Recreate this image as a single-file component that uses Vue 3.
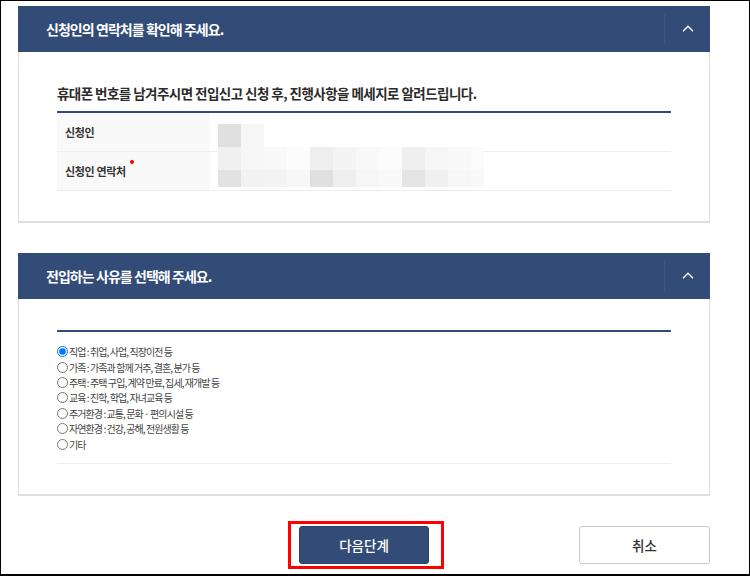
<template>
  <div class="page">
    <section class="panel first">
      <header class="panel-head">
        <h2>신청인의 연락처를 확인해 주세요.</h2>
        <button class="toggle" type="button" aria-label="접기">
          <svg width="12" height="7" viewBox="0 0 12 7"><path d="M1 6.2 6 1.2l5 5" fill="none" stroke="#fff" stroke-width="1.4" /></svg>
        </button>
      </header>
      <div class="panel-body contact">
        <p class="lead">휴대폰 번호를 남겨주시면 전입신고 신청 후, 진행사항을 메세지로 알려드립니다.</p>
        <div class="table">
          <div class="row one">
            <div class="th">신청인</div>
            <div class="td"></div>
          </div>
          <div class="row two">
            <div class="th">신청인 연락처<i class="req"></i></div>
            <div class="td"></div>
          </div>
          <div class="mosaic">
            <span
              v-for="(c, i) in mosaic"
              :key="i"
              :style="{ background: c }"
            ></span>
          </div>
        </div>
      </div>
    </section>

    <section class="panel second">
      <header class="panel-head">
        <h2>전입하는 사유를 선택해 주세요.</h2>
        <button class="toggle" type="button" aria-label="접기">
          <svg width="12" height="7" viewBox="0 0 12 7"><path d="M1 6.2 6 1.2l5 5" fill="none" stroke="#fff" stroke-width="1.4" /></svg>
        </button>
      </header>
      <div class="panel-body reason">
        <div class="options">
          <label v-for="r in reasons" :key="r">
            <input type="radio" name="reason" :value="r" v-model="picked" />
            <span>{{ r }}</span>
          </label>
        </div>
      </div>
    </section>

    <div class="actions">
      <div class="highlight">
        <button class="next" type="button">다음단계</button>
      </div>
      <button class="cancel" type="button">취소</button>
    </div>
  </div>
</template>

<script setup>
import { ref } from 'vue'

const reasons = [
  '직업 : 취업, 사업, 직장이전 등',
  '가족 : 가족과 함께 거주, 결혼, 분가 등',
  '주택 : 주택 구입, 계약 만료, 집세, 재개발 등',
  '교육 : 진학, 학업, 자녀교육 등',
  '주거환경 : 교통, 문화 · 편의시설 등',
  '자연환경 : 건강, 공해, 전원생활 등',
  '기타',
]
const picked = ref(reasons[0])

// 가려진 개인정보 모자이크 (12칸 x 3줄)
const mosaic = [
  '#e0e0e0', '#f6f6f6', '#fff', '#fff', '#fff', '#fff', '#fff', '#fff', '#fff', '#fff', '#fff', '#fff',
  '#f0f0f0', '#f6f6f6', '#f8f8f8', '#fcfcfc', '#eeeeee', '#f4f4f4', '#f8f8f8', '#fcfcfc', '#efefef', '#f6f6f6', '#f9f9f9', '#fbfbfb',
  '#e2e2e2', '#f2f2f2', '#f3f3f3', '#f7f7f7', '#e0e0e0', '#eeeeee', '#f6f6f6', '#f9f9f9', '#e4e4e4', '#f0f0f0', '#f7f7f7', '#f9f9f9',
]
</script>

<style>
html,
body {
  margin: 0;
  background: #fff;
}
</style>

<style scoped>
* {
  box-sizing: border-box;
}

.page {
  width: 750px;
  height: 576px;
  padding: 5px 39px 0 17px;
  border: 1px solid #000;
  border-bottom-width: 2px;
  overflow: hidden;
  background: #fff;
  font-family: "Noto Sans CJK KR", "Noto Sans", sans-serif;
  color: #333;
}

.panel {
  border: 1px solid #dedede;
  border-top: 0;
  border-bottom-width: 2px;
  background: #fff;
}

.panel.second {
  margin-top: 30px;
}

.panel-head {
  height: 46px;
  margin: 0 -1px;
  padding: 0 0 1px 28px;
  display: flex;
  align-items: center;
  justify-content: space-between;
  background: #324b77;
  color: #fff;
}

.panel-head h2 {
  margin: 0;
  font-size: 14px;
  font-weight: 700;
  letter-spacing: -0.95px;
}

.toggle {
  width: 46px;
  height: 30px;
  padding: 0;
  border: 0;
  border-left: 1px solid #3d5682;
  background: none;
  display: flex;
  align-items: center;
  justify-content: center;
}

.panel-body {
  padding: 0 38px;
}

.contact {
  height: 169px;
  padding-top: 31px;
}

.lead {
  margin: 0;
  height: 28px;
  line-height: 20px;
  font-size: 13.5px;
  font-weight: 700;
  letter-spacing: -0.55px;
  color: #2b2b2b;
}

.table {
  position: relative;
  border-top: 2px solid #324b77;
}

.row {
  display: flex;
  border-bottom: 1px solid #eeeeee;
}

.row.one {
  height: 39px;
}

.row.two {
  height: 39px;
}

.th {
  width: 153px;
  padding-left: 8px;
  display: flex;
  align-items: center;
  background: #f9f9f9;
  font-size: 11px;
  font-weight: 700;
  letter-spacing: -0.35px;
  color: #333;
}

.req {
  width: 4px;
  height: 4px;
  margin: -18px 0 0 4px;
  border-radius: 50%;
  background: #f00;
}

.mosaic {
  position: absolute;
  left: 161px;
  top: 11px;
  width: 266px;
  height: 63px;
  display: grid;
  grid-template-columns: repeat(11, 23px) 13px;
  grid-template-rows: 23px 23px 17px;
}

.reason {
  height: 195px;
  padding-top: 31px;
}

.options {
  height: 134px;
  padding-top: 12px;
  border-top: 2px solid #324b77;
  border-bottom: 1px solid #eeeeee;
}

.options label {
  height: 15.4px;
  display: flex;
  align-items: center;
  gap: 1px;
  font-size: 10px;
  letter-spacing: -0.93px;
  color: #444;
}

.options input {
  width: 11px;
  height: 11px;
  margin: 0;
}

.actions {
  margin-top: 25px;
  padding-left: 270px;
  display: flex;
  align-items: flex-start;
}

.highlight {
  width: 156px;
  height: 48px;
  border: 3px solid #f00;
  padding: 2px 0 0 8px;
}

.next,
.cancel {
  height: 38px;
  border-radius: 3px;
  font-family: inherit;
  font-size: 13.5px;
  font-weight: 500;
}

.next {
  display: block;
  width: 130px;
  border: 1px solid #2b4169;
  background: #324b77;
  color: #fff;
}

.cancel {
  width: 131px;
  margin: 5px 0 0 135px;
  border: 1px solid #c8c8c8;
  background: #fff;
  color: #333;
}
</style>
